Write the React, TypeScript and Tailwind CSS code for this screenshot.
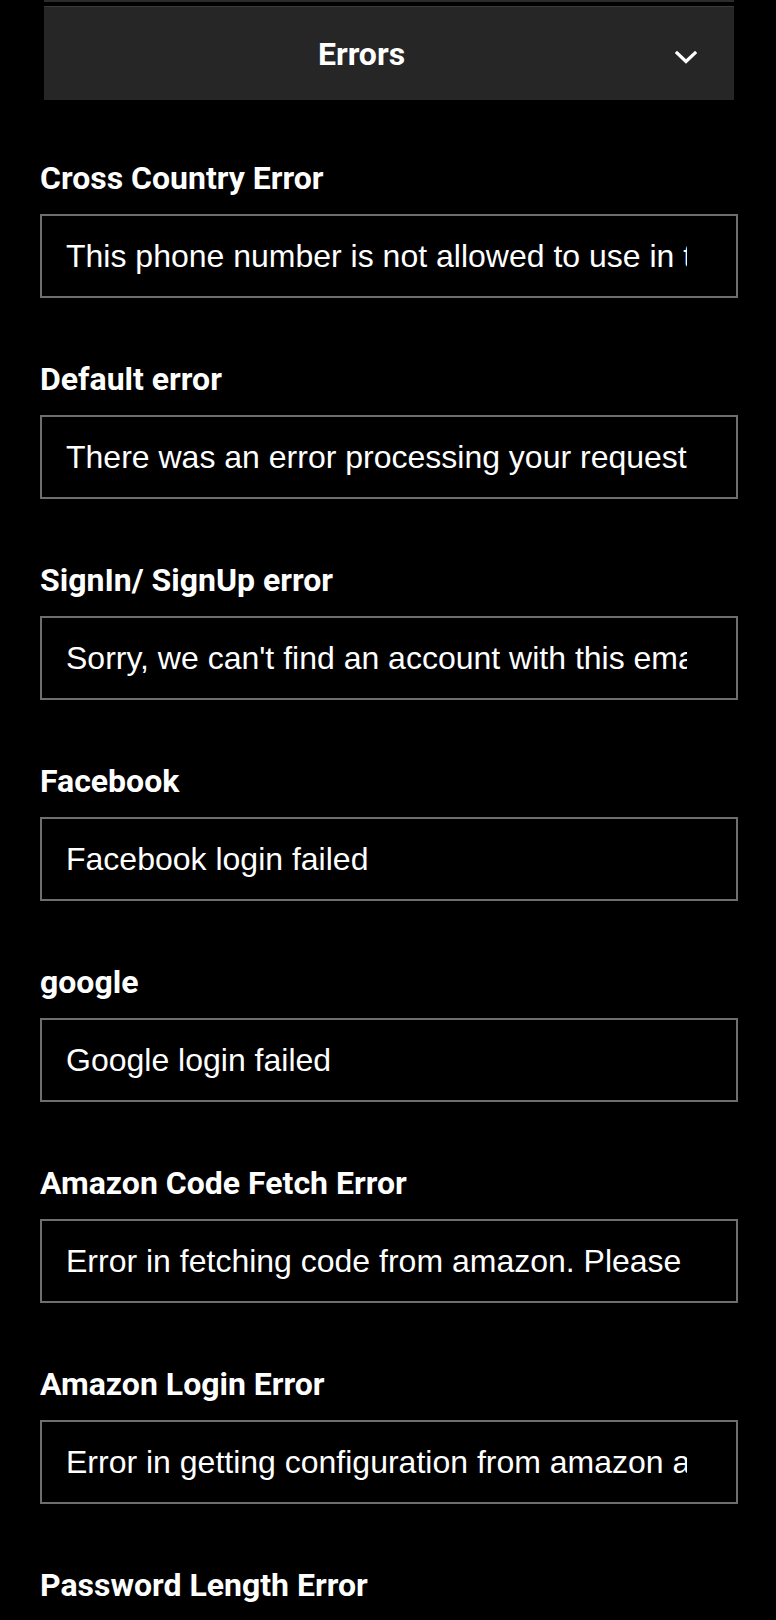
import React from "react";

const fields: { label: string; value: string }[] = [
  { label: "Cross Country Error", value: "This phone number is not allowed to use in this country" },
  { label: "Default error", value: "There was an error processing your request. Please try again." },
  { label: "SignIn/ SignUp error", value: "Sorry, we can't find an account with this email address." },
  { label: "Facebook", value: "Facebook login failed" },
  { label: "google", value: "Google login failed" },
  { label: "Amazon Code Fetch Error", value: "Error in fetching code from amazon. Please try again" },
  { label: "Amazon Login Error", value: "Error in getting configuration from amazon account" },
  { label: "Password Length Error", value: "Password must be at least 8 characters long" },
];

export default function App() {
  return (
    <div className="min-h-[1620px] w-[776px] bg-black text-white pl-[40px] pr-[38px]" style={{ fontFamily: "Roboto, 'Liberation Sans', sans-serif" }}>
      <div className="mx-[4px] h-[2px] bg-[#2b2b2b]" />
      <div className="mx-[4px] mt-[4px] flex h-[94px] items-center border-t border-[#3a3a3a] bg-[#262626]">
        <div className="flex-1 pl-[4px] text-center text-[32px] font-bold leading-[38px]">Errors</div>
        <svg width="22" height="13" viewBox="0 0 22 13" className="mr-[37px] mt-[8px]" fill="none">
          <polyline points="2,2 11,10.5 20,2" stroke="#ffffff" strokeWidth="3.2" strokeLinecap="square" />
        </svg>
      </div>
      <div className="mt-[59px] flex flex-col gap-[62px]">
        {fields.map((f) => (
          <div key={f.label} className="flex flex-col">
            <label className="mb-[17px] text-[32px] font-bold leading-[38px]">{f.label}</label>
            <input
              readOnly
              value={f.value}
              className="h-[84px] w-full border-2 border-[#6e6e6e] bg-black pl-[24px] pr-[49px] text-[32px] text-white outline-none"
              style={{ fontFamily: "'Liberation Sans', Arial, sans-serif" }}
            />
          </div>
        ))}
      </div>
    </div>
  );
}
